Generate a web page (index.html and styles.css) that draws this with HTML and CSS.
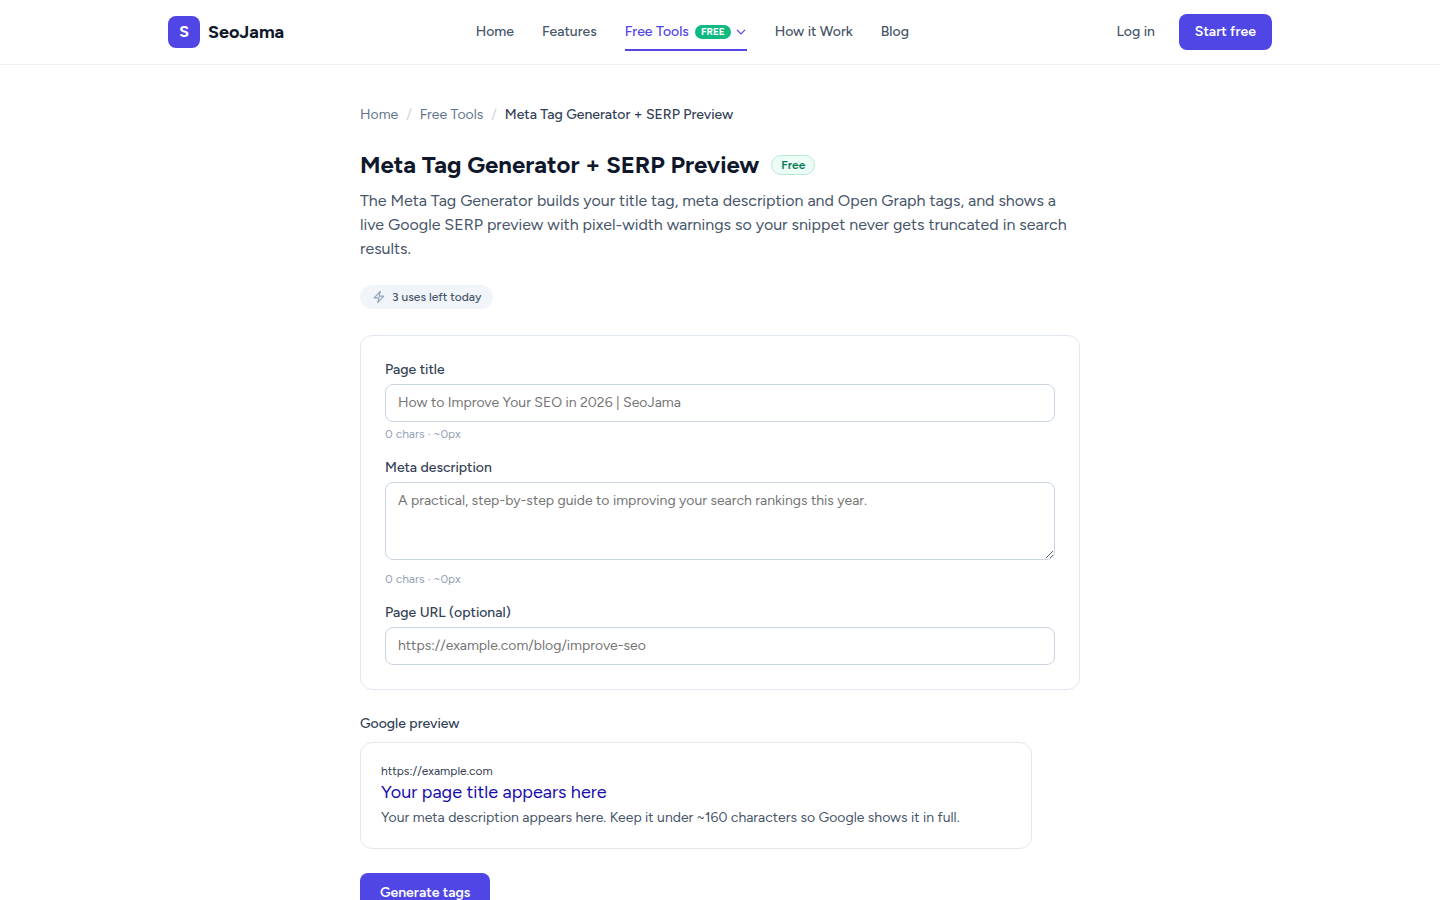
FILE: index.html
```html
<!DOCTYPE html>
<html lang="en">
<head>
    <meta charset="UTF-8">
    <meta name="viewport" content="width=device-width, initial-scale=1.0">
    <title>Meta Tag Generator + SERP Preview | SeoJama</title>
    <link rel="stylesheet" href="styles.css">
</head>
<body>
    <header class="header">
        <div class="header-inner">
            <a class="brand" href="#">
                <span class="brand-mark">S</span>
                <span>SeoJama</span>
            </a>
            <nav class="nav">
                <a class="nav-link" href="#">Home</a>
                <a class="nav-link" href="#">Features</a>
                <a class="nav-link active" href="#">
                    Free Tools
                    <span class="nav-badge">FREE</span>
                    <svg class="chevron" viewBox="0 0 24 24" width="12" height="12" fill="none" stroke="currentColor" stroke-width="2.5" stroke-linecap="round" stroke-linejoin="round"><path d="M19.5 8.25l-7.5 7.5-7.5-7.5"/></svg>
                </a>
                <a class="nav-link" href="#">How it Work</a>
                <a class="nav-link" href="#">Blog</a>
            </nav>
            <div class="account">
                <a class="nav-link login" href="#">Log in</a>
                <a class="btn btn-small" href="#">Start free</a>
            </div>
        </div>
    </header>

    <main class="main">
        <nav class="breadcrumb" aria-label="Breadcrumb">
            <a href="#">Home</a>
            <span class="sep">/</span>
            <a href="#">Free Tools</a>
            <span class="sep">/</span>
            <span class="current">Meta Tag Generator + SERP Preview</span>
        </nav>

        <div class="title-row">
            <h1>Meta Tag Generator + SERP Preview</h1>
            <span class="free-tag">Free</span>
        </div>
        <p class="intro">The Meta Tag Generator builds your title tag, meta description and Open Graph tags, and shows a live Google SERP preview with pixel-width warnings so your snippet never gets truncated in search results.</p>

        <div class="uses">
            <svg viewBox="0 0 24 24" width="14" height="14" fill="none" stroke="currentColor" stroke-width="2" stroke-linecap="round" stroke-linejoin="round"><path d="M3.75 13.5l10.5-11.25L12 10.5h8.25L9.75 21.75 12 13.5H3.75z"/></svg>
            <span>3 uses left today</span>
        </div>

        <form id="tag-form">
            <div class="card">
                <div class="field">
                    <label for="page-title">Page title</label>
                    <input type="text" id="page-title" placeholder="How to Improve Your SEO in 2026 | SeoJama">
                    <p class="hint" id="title-hint">0 chars · ~0px</p>
                </div>
                <div class="field field-area">
                    <label for="meta-desc">Meta description</label>
                    <textarea id="meta-desc" rows="3" placeholder="A practical, step-by-step guide to improving your search rankings this year."></textarea>
                    <p class="hint" id="desc-hint">0 chars · ~0px</p>
                </div>
                <div class="field">
                    <label for="page-url">Page URL (optional)</label>
                    <input type="text" id="page-url" placeholder="https://example.com/blog/improve-seo">
                </div>
            </div>

            <h2 class="preview-label">Google preview</h2>
            <div class="preview">
                <div class="preview-url">https://example.com</div>
                <div class="preview-title">Your page title appears here</div>
                <div class="preview-desc">Your meta description appears here. Keep it under ~160 characters so Google shows it in full.</div>
            </div>

            <button class="btn" type="button">Generate tags</button>
        </form>
    </main>
</body>
</html>
```
FILE: styles.css
```css
* {
    box-sizing: border-box;
}

body {
    margin: 0;
    background-color: #fff;
    color: #0f172a;
    font-family: Figtree, Lato, sans-serif;
    font-size: 14px;
    line-height: 20px;
}

a {
    color: inherit;
    text-decoration: none;
}

h1, h2, p {
    margin: 0;
}

/* Header */
.header {
    border-bottom: 1px solid #eceef2;
}

.header-inner {
    display: flex;
    justify-content: space-between;
    align-items: center;
    max-width: 1152px;
    height: 64px;
    margin: 0 auto;
    padding: 0 24px;
}

.brand {
    display: flex;
    align-items: center;
    gap: 8px;
    font-size: 18px;
    font-weight: 700;
}

.brand-mark {
    display: flex;
    justify-content: center;
    align-items: center;
    width: 32px;
    height: 32px;
    border-radius: 8px;
    background-color: #4f46e5;
    color: #fff;
    font-size: 16px;
}

.nav {
    display: flex;
    align-items: center;
    gap: 28px;
}

.nav-link {
    display: flex;
    align-items: center;
    color: #475569;
    font-weight: 500;
}

.nav-link.active {
    gap: 6px;
    padding: 7px 0;
    border-top: 2px solid transparent;
    border-bottom: 2px solid #4f46e5;
    color: #4f46e5;
}

.nav-badge {
    padding: 0 6px;
    border-radius: 999px;
    background-color: #10b981;
    color: #fff;
    font-size: 10px;
    font-weight: 700;
    line-height: 14px;
}

.chevron {
    margin-left: -2px;
}

.account {
    display: flex;
    align-items: center;
    gap: 8px;
}

.login {
    padding: 8px 16px;
}

.btn {
    display: inline-block;
    padding: 10px 20px;
    border: 0;
    border-radius: 8px;
    background-color: #4f46e5;
    color: #fff;
    font: inherit;
    font-weight: 600;
    cursor: pointer;
}

.btn-small {
    padding: 8px 16px;
}

.btn:hover {
    background-color: #4338ca;
}

/* Page */
.main {
    max-width: 768px;
    margin: 0 auto;
    padding: 40px 24px 64px;
}

.breadcrumb {
    display: flex;
    gap: 8px;
    margin-bottom: 24px;
    color: #64748b;
}

.breadcrumb .sep {
    color: #cbd5e1;
}

.breadcrumb .current {
    color: #334155;
    font-weight: 500;
}

.title-row {
    display: flex;
    align-items: center;
    gap: 12px;
    margin-bottom: 8px;
}

h1 {
    font-size: 24px;
    font-weight: 700;
    line-height: 32px;
}

.free-tag {
    padding: 1px 9px;
    border: 1px solid #bbe8d5;
    border-radius: 999px;
    background-color: #ecfdf5;
    color: #047857;
    font-size: 12px;
    font-weight: 600;
    line-height: 16px;
}

.intro {
    color: #475569;
    font-size: 16px;
    line-height: 24px;
}

.uses {
    display: flex;
    align-items: center;
    gap: 6px;
    width: fit-content;
    margin: 24px 0 26px;
    padding: 4px 12px;
    border-radius: 999px;
    background-color: #f1f5f9;
    color: #475569;
    font-size: 12px;
    font-weight: 500;
    line-height: 16px;
}

.uses svg {
    color: #94a3b8;
}

/* Form */
.card {
    display: grid;
    gap: 16px;
    padding: 24px;
    border: 1px solid #e2e8f0;
    border-radius: 12px;
}

.field label {
    display: block;
    margin-bottom: 4px;
    color: #334155;
    font-weight: 500;
}

.field input,
.field textarea {
    display: block;
    width: 100%;
    padding: 8px 12px;
    border: 1px solid #cbd5e1;
    border-radius: 8px;
    background-color: #fff;
    color: #0f172a;
    font: inherit;
}

.field input::placeholder,
.field textarea::placeholder {
    color: #757575;
}

.field input:focus,
.field textarea:focus {
    outline: none;
    border-color: #4f46e5;
}

.hint {
    margin-top: 4px;
    color: #94a3b8;
    font-size: 12px;
    line-height: 16px;
}

.field-area .hint {
    margin-top: 11px;
}

.preview-label {
    margin: 24px 0 8px;
    color: #334155;
    font-size: 14px;
    font-weight: 500;
}

.preview {
    max-width: 672px;
    margin-bottom: 24px;
    padding: 20px;
    border: 1px solid #e5e7eb;
    border-radius: 12px;
}

.preview-url {
    color: #334155;
    font-size: 12px;
    line-height: 16px;
}

.preview-title {
    margin-bottom: 2px;
    color: #1a0dab;
    font-size: 18px;
    line-height: 27px;
}

.preview-desc {
    color: #475569;
}
```
